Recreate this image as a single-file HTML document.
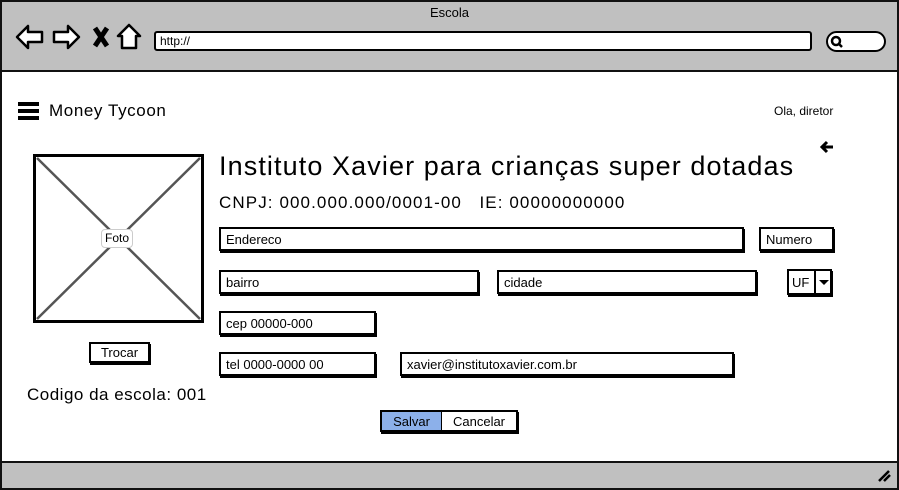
<!DOCTYPE html>
<html><head><meta charset="utf-8"><style>
*{box-sizing:border-box;margin:0;padding:0}
body{width:899px;height:490px;position:relative;background:#fff;font-family:"Liberation Sans",sans-serif;overflow:hidden;color:#000}
.a{position:absolute}
.f{position:absolute;border:2px solid #000;box-shadow:1px 2px 0 #000;background:#fff;font-size:13px;padding-left:5px;display:flex;align-items:center}
.t{position:absolute;white-space:nowrap}
</style></head><body>
<div class="a" style="left:0;top:0;width:899px;height:490px;border:2px solid #111"></div>
<div class="a" style="left:2px;top:2px;width:895px;height:70px;background:#c0c0c0;border-bottom:2px solid #111"></div>
<div class="t" style="left:0;width:899px;text-align:center;top:5px;font-size:13px">Escola</div>
<svg class="a" style="left:14px;top:22px" width="135" height="30" viewBox="0 0 135 30">
<g fill="#fff" stroke="#000" stroke-width="2.5" stroke-linejoin="round">
<path d="M3 15 L14 4 L14 10 L28 10 L28 20 L14 20 L14 26 Z"/>
<path d="M65 15 L54 4 L54 10 L40 10 L40 20 L54 20 L54 26 Z"/>
<path d="M115 3 L104 14 L108 14 L108 26 L122 26 L122 14 L126 14 Z"/>
</g>
<path d="M81 6 L93 24 M93 6 L81 24" stroke="#000" stroke-width="5"/>
</svg>
<div class="a" style="left:154px;top:31px;width:658px;height:20px;background:#fff;border:2px solid #000;border-radius:3px;font-size:12px;padding-left:4px;line-height:16px">http://</div>
<div class="a" style="left:826px;top:31px;width:60px;height:21px;background:#fff;border:2px solid #000;border-radius:11px"></div>
<svg class="a" style="left:830px;top:35px" width="14" height="14"><circle cx="6" cy="6" r="4" fill="none" stroke="#000" stroke-width="2.5"/><path d="M9 9 L12 12" stroke="#000" stroke-width="2.5"/></svg>
<div class="a" style="left:18px;top:102px;width:21px;height:3.5px;background:#000"></div>
<div class="a" style="left:18px;top:109px;width:21px;height:3.5px;background:#000"></div>
<div class="a" style="left:18px;top:116px;width:21px;height:3.5px;background:#000"></div>
<div class="t" style="left:49px;top:101px;font-size:17px;letter-spacing:0.6px">Money Tycoon</div>
<div class="t" style="left:774px;top:104px;font-size:12px">Ola, diretor</div>
<svg class="a" style="left:819px;top:140px" width="16" height="14"><path d="M14 7 L3 7 M8 2 L3 7 L8 12" stroke="#000" stroke-width="3" fill="none"/></svg>
<svg class="a" style="left:33px;top:154px" width="172" height="170"><rect x="1.5" y="1.5" width="168" height="166" fill="#fff" stroke="#000" stroke-width="3"/><path d="M4 4 L167 165 M167 4 L4 165" stroke="#555" stroke-width="2.5"/></svg>
<div class="a" style="left:101px;top:229px;width:32px;height:19px;background:#fff;border:1px solid #ccc;border-radius:4px;font-size:12px;text-align:center;line-height:17px">Foto</div>
<div class="t" style="left:219px;top:151px;font-size:27px;letter-spacing:1.1px">Instituto Xavier para crianças super dotadas</div>
<div class="t" style="left:219px;top:193px;font-size:17px;letter-spacing:1.1px">CNPJ: 000.000.000/0001-00 &nbsp;&nbsp;IE: 00000000000</div>
<div class="f" style="left:219px;top:227px;width:525px;height:24px">Endereco</div>
<div class="f" style="left:759px;top:227px;width:75px;height:24px">Numero</div>
<div class="f" style="left:219px;top:270px;width:260px;height:24px">bairro</div>
<div class="f" style="left:497px;top:270px;width:260px;height:24px">cidade</div>
<div class="f" style="left:787px;top:269px;width:45px;height:26px;padding-left:3px">UF<span style="position:absolute;left:25px;top:0;height:22px;border-left:2px solid #000;width:16px"></span><span style="position:absolute;left:30px;top:9px;border:5px solid transparent;border-top:5px solid #000"></span></div>
<div class="f" style="left:219px;top:311px;width:157px;height:24px">cep 00000-000</div>
<div class="f" style="left:219px;top:352px;width:157px;height:24px">tel 0000-0000 00</div>
<div class="f" style="left:400px;top:352px;width:334px;height:24px">xavier@institutoxavier.com.br</div>
<div class="f" style="left:89px;top:342px;width:61px;height:21px;justify-content:center;padding:0">Trocar</div>
<div class="t" style="left:27px;top:385px;font-size:17px;letter-spacing:0.5px">Codigo da escola: 001</div>
<div class="f" style="left:380px;top:410px;width:138px;height:22px;padding:0">
<span style="width:60px;height:100%;background:#8cb0ea;display:flex;align-items:center;justify-content:center;border-right:1px solid #000">Salvar</span>
<span style="flex:1;text-align:center">Cancelar</span></div>
<div class="a" style="left:2px;top:461px;width:895px;height:27px;background:#c0c0c0;border-top:2px solid #111"></div>
<svg class="a" style="left:877px;top:469px" width="16" height="14"><path d="M2 12 L12 2 M7 12 L13 6" stroke="#000" stroke-width="2.5"/></svg>
</body></html>
